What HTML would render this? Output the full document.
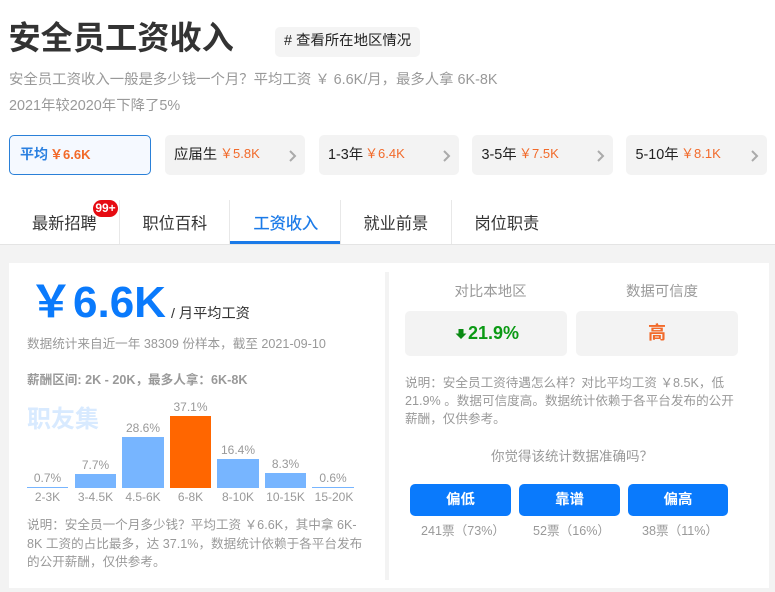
<!DOCTYPE html>
<html lang="zh"><head><meta charset="utf-8">
<style>
html,body{margin:0;padding:0;background:#fff}
body{width:775px;height:592px;position:relative;overflow:hidden;font-family:"Liberation Sans","Noto Sans CJK SC",sans-serif;color:#333}
.a{position:absolute;white-space:nowrap}
.g{color:#999}
.card{position:absolute;top:135px;height:40px;box-sizing:border-box;background:#f3f3f3;border-radius:5px;font-size:14.4px;line-height:39px;color:#222}
.card span{position:absolute;top:1px;white-space:nowrap}
.card span.v{top:-1px}
.card i{font-style:normal;color:#f26a2a;font-size:13px}
.card svg{position:absolute;top:15px}
.tab{position:absolute;top:213px;font-size:16.2px;line-height:22px;color:#333;white-space:nowrap}
.dv{position:absolute;top:200px;height:44px;width:1px;background:#e8e8e8}
.bar{position:absolute;background:#77b5ff}
.pc,.xl{position:absolute;text-align:center;font-size:12px;line-height:16px;color:#999;white-space:nowrap}
.btn{position:absolute;top:484px;height:32px;background:#0a7afc;border-radius:5px;color:#fff;font-size:14.4px;font-weight:bold;line-height:33px;text-align:center}
.vt{position:absolute;top:522px;font-size:12.6px;line-height:18px;color:#999;white-space:nowrap}
.box{position:absolute;top:311px;height:45px;background:#f3f3f3;border-radius:5px}
.txt{font-size:12.6px;line-height:19px;color:#999}
</style></head><body>

<div class="a" style="left:8.5px;top:18px;font-size:32.2px;line-height:40px;font-weight:bold;color:#333">安全员工资收入</div>
<div class="a" style="left:275px;top:27px;width:145px;height:30px;background:#f4f4f4;border-radius:5px;font-size:14.4px;line-height:29px;color:#222;text-indent:9px">#&nbsp;查看所在地区情况</div>
<div class="a g" style="left:9px;top:70px;font-size:14.4px;line-height:20px">安全员工资收入一般是多少钱一个月？平均工资 ￥ 6.6K/月，最多人拿 6K-8K</div>
<div class="a g" style="left:9px;top:96px;font-size:14.4px;line-height:20px">2021年较2020年下降了5%</div>

<div class="card" style="left:9px;width:142px;background:#f5f9ff;border:1px solid #2a80d8;line-height:37px">
  <span style="left:10px;top:0;color:#2a80e0;font-weight:bold;font-size:14px">平均</span><span class="v" style="left:40px;top:0;font-weight:bold"><i>￥6.6K</i></span>
</div>
<div class="card" style="left:165px;width:140px"><span style="left:9px">应届生</span><span class="v" style="left:55px"><i>￥5.8K</i></span><svg style="left:123px" width="10" height="12" viewBox="0 0 10 12"><path d="M2 1l5 5-5 5" fill="none" stroke="#aaa" stroke-width="2"/></svg></div>
<div class="card" style="left:319px;width:140px"><span style="left:9px">1-3年</span><span class="v" style="left:46px"><i>￥6.4K</i></span><svg style="left:123px" width="10" height="12" viewBox="0 0 10 12"><path d="M2 1l5 5-5 5" fill="none" stroke="#aaa" stroke-width="2"/></svg></div>
<div class="card" style="left:472px;width:141px"><span style="left:9.5px">3-5年</span><span class="v" style="left:47px"><i>￥7.5K</i></span><svg style="left:124px" width="10" height="12" viewBox="0 0 10 12"><path d="M2 1l5 5-5 5" fill="none" stroke="#aaa" stroke-width="2"/></svg></div>
<div class="card" style="left:626px;width:141px"><span style="left:9.5px">5-10年</span><span class="v" style="left:55px"><i>￥8.1K</i></span><svg style="left:124px" width="10" height="12" viewBox="0 0 10 12"><path d="M2 1l5 5-5 5" fill="none" stroke="#aaa" stroke-width="2"/></svg></div>

<div class="tab" style="left:32px">最新招聘</div>
<div class="a" style="left:93px;top:200px;width:25px;height:17px;background:#e60b12;border-radius:9px;color:#fff;font-size:12px;font-weight:bold;line-height:17px;text-align:center">99+</div>
<div class="dv" style="left:119px"></div>
<div class="tab" style="left:142.5px">职位百科</div>
<div class="dv" style="left:229px"></div>
<div class="tab" style="left:253.5px;color:#1a7ae8;-webkit-text-stroke:.25px #1a7ae8">工资收入</div>
<div class="dv" style="left:340px"></div>
<div class="tab" style="left:363.5px">就业前景</div>
<div class="dv" style="left:451px"></div>
<div class="tab" style="left:474.5px">岗位职责</div>

<div class="a" style="left:0;top:244px;width:775px;height:348px;background:#f3f3f3;border-top:1px solid #e4e4e4;box-sizing:border-box"></div>
<div class="a" style="left:230px;top:241px;width:110px;height:3px;background:#1a7ae8"></div>
<div class="a" style="left:9px;top:263px;width:760px;height:325px;background:#fff"></div>
<div class="a" style="left:385px;top:272px;width:4px;height:308px;background:#f3f3f3"></div>

<div class="a" style="left:29px;top:278px;font-size:44px;line-height:50px;font-weight:bold;color:#0a7afc">￥6.6K</div>
<div class="a" style="left:171px;top:305px;font-size:14.2px;line-height:18px;color:#333">/ 月平均工资</div>
<div class="a txt" style="left:27px;top:335px">数据统计来自近一年 38309 份样本，截至 2021-09-10</div>
<div class="a" style="left:27px;top:371px;font-size:12.6px;line-height:18px;font-weight:bold;color:#999">薪酬区间: 2K - 20K，最多人拿：6K-8K</div>
<div class="a" style="left:27px;top:405px;font-size:24px;line-height:30px;font-weight:bold;color:#d8eaff">职友集</div>

<div class="bar" style="left:27px;top:487px;width:41px;height:1px"></div>
<div class="bar" style="left:75px;top:474px;width:41px;height:14px"></div>
<div class="bar" style="left:122px;top:437px;width:42px;height:51px"></div>
<div class="bar" style="left:170px;top:416px;width:41px;height:72px;background:#ff6600"></div>
<div class="bar" style="left:217px;top:459px;width:42px;height:29px"></div>
<div class="bar" style="left:265px;top:473px;width:41px;height:15px"></div>
<div class="bar" style="left:312px;top:487px;width:42px;height:1px"></div>

<div class="pc" style="left:27px;top:470px;width:41px">0.7%</div>
<div class="pc" style="left:75px;top:457px;width:41px">7.7%</div>
<div class="pc" style="left:122px;top:420px;width:42px">28.6%</div>
<div class="pc" style="left:170px;top:399px;width:41px">37.1%</div>
<div class="pc" style="left:217px;top:442px;width:42px">16.4%</div>
<div class="pc" style="left:265px;top:456px;width:41px">8.3%</div>
<div class="pc" style="left:312px;top:470px;width:42px">0.6%</div>

<div class="xl" style="left:27px;top:489px;width:41px">2-3K</div>
<div class="xl" style="left:75px;top:489px;width:41px">3-4.5K</div>
<div class="xl" style="left:122px;top:489px;width:42px">4.5-6K</div>
<div class="xl" style="left:170px;top:489px;width:41px">6-8K</div>
<div class="xl" style="left:217px;top:489px;width:42px">8-10K</div>
<div class="xl" style="left:265px;top:489px;width:41px">10-15K</div>
<div class="xl" style="left:313px;top:489px;width:42px">15-20K</div>

<div class="a txt" style="left:27px;top:516px">说明：安全员一个月多少钱？平均工资 ￥6.6K，其中拿 6K-</div>
<div class="a txt" style="left:27px;top:535px">8K 工资的占比最多，达 37.1%，数据统计依赖于各平台发布</div>
<div class="a txt" style="left:27px;top:553px">的公开薪酬，仅供参考。</div>

<div class="a" style="left:405px;top:283px;width:171px;text-align:center;font-size:14.4px;line-height:18px;color:#999">对比本地区</div>
<div class="a" style="left:576px;top:283px;width:172px;text-align:center;font-size:14.4px;line-height:18px;color:#999">数据可信度</div>
<div class="box" style="left:405px;width:162px"></div>
<div class="box" style="left:576px;width:162px"></div>
<svg class="a" style="left:455px;top:328px" width="12" height="12" viewBox="0 0 12 12"><path d="M3.5 1h5v4.5H11.5L6 11 .5 5.5H3.5z" fill="#0b8a14"/></svg>
<div class="a" style="left:468px;top:322px;font-size:18px;line-height:22px;font-weight:bold;color:#0b9a14">21.9%</div>
<div class="a" style="left:576px;top:322px;width:162px;text-align:center;font-size:18px;line-height:22px;font-weight:bold;color:#f26a2a">高</div>

<div class="a txt" style="left:405px;top:374px">说明：安全员工资待遇怎么样？对比平均工资 ￥8.5K，低</div>
<div class="a txt" style="left:405px;top:392px">21.9% 。数据可信度高。数据统计依赖于各平台发布的公开</div>
<div class="a txt" style="left:405px;top:410px">薪酬，仅供参考。</div>

<div class="a" style="left:491px;top:448px;font-size:13.5px;line-height:18px;color:#999">你觉得该统计数据准确吗？</div>
<div class="btn" style="left:410px;width:101px">偏低</div>
<div class="btn" style="left:519px;width:101px">靠谱</div>
<div class="btn" style="left:628px;width:100px">偏高</div>
<div class="vt" style="left:421px">241票（73%）</div>
<div class="vt" style="left:533px">52票（16%）</div>
<div class="vt" style="left:642px">38票（11%）</div>
</body></html>
